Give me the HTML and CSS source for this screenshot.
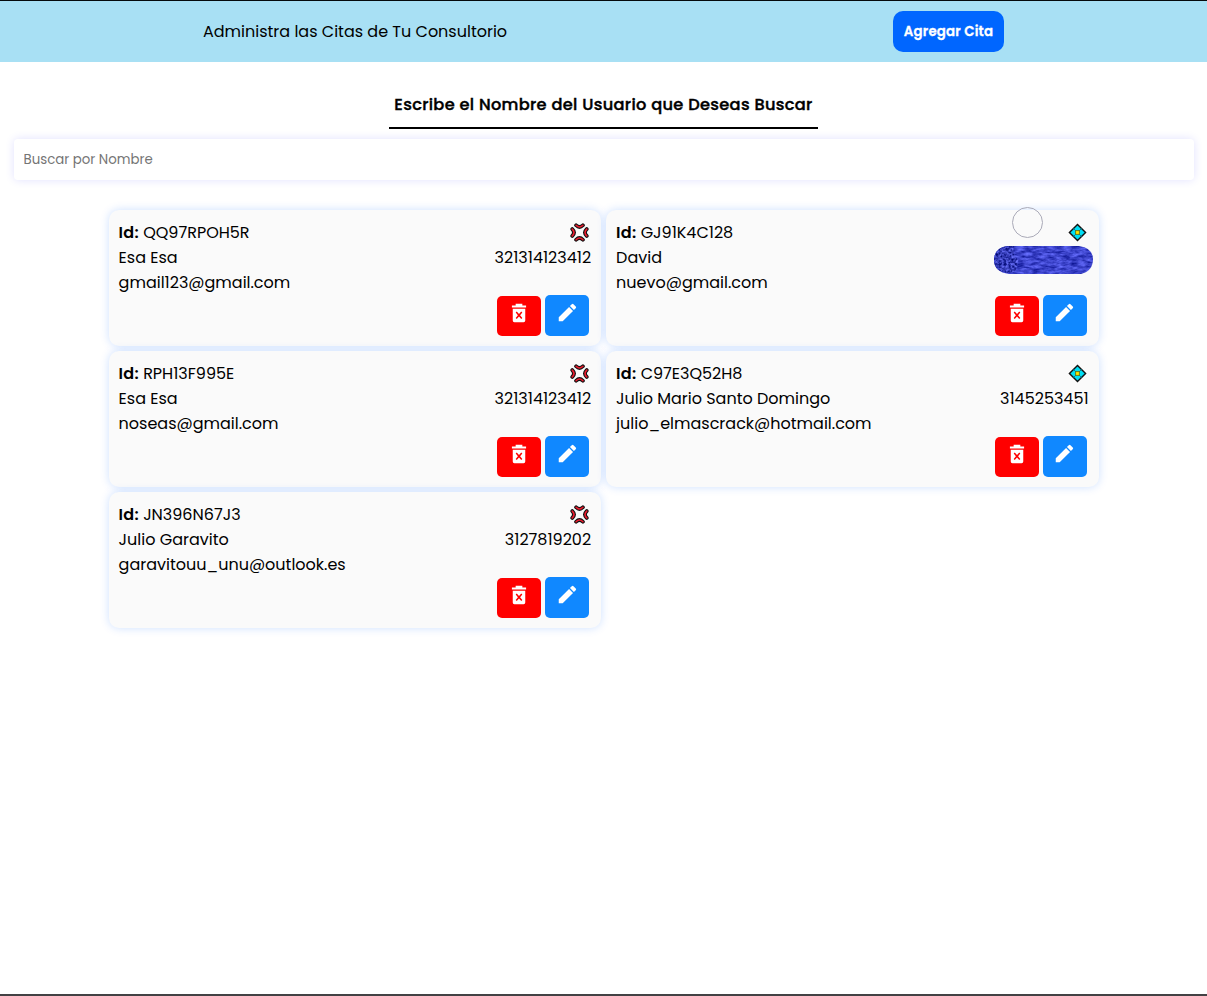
FILE: index.html
```
<!DOCTYPE html>
<html lang="es">
<head>
<meta charset="utf-8">
<title>Citas</title>
<link rel="stylesheet" href="styles.css">
</head>
<body>
<svg class="defs" width="0" height="0">
  <symbol id="urgent" viewBox="0 0 20 20">
    <g fill="none" stroke-linecap="round">
      <path stroke="#111" stroke-width="4" d="M6.400 2.400Q10 6 13.600 2.400M6.400 17.600Q10 14 13.600 17.600M2.400 6.400Q6 10 2.400 13.600M17.600 6.400Q14 10 17.600 13.600"/>
      <path stroke="#ee1c2e" stroke-width="1.700" d="M6.400 2.400Q10 6 13.600 2.400M6.400 17.600Q10 14 13.600 17.600M2.400 6.400Q6 10 2.400 13.600M17.600 6.400Q14 10 17.600 13.600"/>
    </g>
  </symbol>
  <symbol id="normal" viewBox="0 0 20 20">
    <path d="M10 1.500 18.500 10 10 18.500 1.500 10Z" fill="#00dff5" stroke="#111" stroke-width="1.500"/>
    <path d="m5.700 5.700 8.600 8.600m0-8.600-8.600 8.600" stroke="#087b8b" stroke-width="1"/>
    <path d="M8 8h4v4H8z" fill="#ffe600" stroke="#665f00" stroke-width=".8"/>
  </symbol>
  <symbol id="trash" viewBox="0 0 24 24">
    <path fill="#fff" fill-rule="evenodd" d="M3.500 3h4.500V1h8v2h4.500v2.500h-17zM4.500 7h15v14q0 2-2 2h-11q-2 0-2-2zM9.300 10.200 8 11.500 10.700 14.700 8 17.900 9.300 19.200 12 16.200 14.700 19.200 16 17.900 13.300 14.700 16 11.500 14.700 10.200 12 13.200z"/>
  </symbol>
  <symbol id="pencil" viewBox="0 0 24 24">
    <path fill="#fff" d="M2 17.500V22h4.500L18.300 10.200l-4.500-4.500zM21.400 7.100a1.300 1.300 0 0 0 0-1.900l-2.600-2.600a1.300 1.300 0 0 0-1.900 0l-2.100 2.100 4.500 4.500z"/>
  </symbol>
</svg>
<header class="header">
  <p class="brand">Administra las Citas de Tu Consultorio</p>
  <button class="add">Agregar Cita</button>
</header>
<main>
  <h1 class="title">Escribe el Nombre del Usuario que Deseas Buscar</h1>
  <input class="search" placeholder="Buscar por Nombre">
  <section class="grid">
    <article class="card">
      <div class="row"><p><b>Id:</b> QQ97RPOH5R</p><svg class="state"><use href="#urgent"/></svg></div>
      <div class="row"><p>Esa Esa</p><p>321314123412</p></div>
      <p>gmail123@gmail.com</p>
      <div class="actions"><button class="del"><svg><use href="#trash"/></svg></button><button class="edit"><svg><use href="#pencil"/></svg></button></div>
    </article>
    <article class="card">
      <div class="row"><p><b>Id:</b> GJ91K4C128</p><svg class="state"><use href="#normal"/></svg></div>
      <div class="row"><p>David</p></div>
      <p>nuevo@gmail.com</p>
      <div class="actions"><button class="del"><svg><use href="#trash"/></svg></button><button class="edit"><svg><use href="#pencil"/></svg></button></div>
      <svg class="scribble" viewBox="0 0 99 28">
        <defs>
          <filter id="ink" x="0" y="0" width="1" height="1" color-interpolation-filters="sRGB"><feTurbulence type="fractalNoise" baseFrequency=".13 .4" numOctaves="3" seed="4"/><feColorMatrix values=".5 0 0 0 -.01  .5 0 0 0 .02  .6 0 0 0 .5  0 0 0 0 1"/><feComposite in2="SourceGraphic" operator="in"/></filter>
          <filter id="grain" x="0" y="0" width="1" height="1" color-interpolation-filters="sRGB"><feTurbulence type="fractalNoise" baseFrequency=".4" numOctaves="2" seed="8"/><feColorMatrix values=".7 0 0 0 -.14  .7 0 0 0 -.11  .9 0 0 0 .27  0 0 0 0 1"/><feComposite in2="SourceGraphic" operator="in"/></filter>
        </defs>
        <path d="M13 0h72q14 2 14 13 0 12-12 15H15Q0 26 0 14 0 2 13 0z" fill="#3840c4" filter="url(#ink)"/>
        <path d="M13 0h7q-2 8 4 14 0 8-4 12l-7 1Q0 25 0 14 0 2 13 0z" fill="#3840c4" filter="url(#grain)"/>
      </svg>
      <span class="pointer"></span>
    </article>
    <article class="card">
      <div class="row"><p><b>Id:</b> RPH13F995E</p><svg class="state"><use href="#urgent"/></svg></div>
      <div class="row"><p>Esa Esa</p><p>321314123412</p></div>
      <p>noseas@gmail.com</p>
      <div class="actions"><button class="del"><svg><use href="#trash"/></svg></button><button class="edit"><svg><use href="#pencil"/></svg></button></div>
    </article>
    <article class="card">
      <div class="row"><p><b>Id:</b> C97E3Q52H8</p><svg class="state"><use href="#normal"/></svg></div>
      <div class="row"><p>Julio Mario Santo Domingo</p><p>3145253451</p></div>
      <p>julio_elmascrack@hotmail.com</p>
      <div class="actions"><button class="del"><svg><use href="#trash"/></svg></button><button class="edit"><svg><use href="#pencil"/></svg></button></div>
    </article>
    <article class="card">
      <div class="row"><p><b>Id:</b> JN396N67J3</p><svg class="state"><use href="#urgent"/></svg></div>
      <div class="row"><p>Julio Garavito</p><p>3127819202</p></div>
      <p>garavitouu_unu@outlook.es</p>
      <div class="actions"><button class="del"><svg><use href="#trash"/></svg></button><button class="edit"><svg><use href="#pencil"/></svg></button></div>
    </article>
  </section>
</main>
</body>
</html>
```
FILE: styles.css
```
* { box-sizing: border-box; margin: 0; padding: 0; }
body { height: 996px; overflow: hidden; border-top: 1px solid #050a0c; border-bottom: 2px solid #434144; background: #fff; color: #000; font: 16px/25px Poppins, Inter, sans-serif; }
button, input { font-family: inherit; border: 0; }
.defs { position: absolute; }
.header { height: 61px; padding: 0 203px; background: #a8e0f4; display: flex; align-items: center; justify-content: space-between; white-space: nowrap; }
.add { width: 111px; height: 41px; border-radius: 10px; background: #06f; color: #fff; font-size: 13.33px; font-weight: 600; letter-spacing: .2px; -webkit-text-stroke: .3px #fff; white-space: nowrap; }
.title { width: 429px; height: 49px; margin: 18px auto 10px; border-bottom: 2px solid #000; font-size: 16.200px; line-height: 49px; font-weight: 500; letter-spacing: .33px; -webkit-text-stroke: .4px #000; text-align: center; white-space: nowrap; }
.search { display: block; width: 1180px; height: 41px; margin-left: 14px; padding: 0 9.500px; border-radius: 4px; background: #fff; box-shadow: 0 0 10px rgba(0, 0, 255, .12); font-size: 13.33px; }
.search::placeholder { color: #757575; }
.grid { width: 990px; margin: 30px 0 0 108.600px; display: grid; grid-template-columns: 1fr 1fr; gap: 5px; }
.card { position: relative; height: 136px; padding: 10px; border-radius: 10px; background: #fafafa; box-shadow: 0 0 10px rgba(0, 100, 255, .2); white-space: nowrap; }
.row { height: 25px; display: flex; align-items: center; justify-content: space-between; }
b { font-weight: 600; letter-spacing: .25px; }
.state { width: 19px; height: 19px; margin: -1px 2px 0 0; }
.actions { height: 41px; padding-right: 2px; display: flex; gap: 4px; justify-content: flex-end; align-items: flex-end; }
.actions button { width: 44px; border-radius: 5px; display: flex; justify-content: center; }
.del { height: 40px; padding-top: 7px; background: #f00; }
.edit { height: 41px; padding-top: 7px; background: #1088ff; }
.del svg { width: 20px; height: 20px; }
.edit svg { width: 21px; height: 21px; }
.scribble { position: absolute; left: 388px; top: 36px; width: 99px; height: 28px; }
.pointer { position: absolute; left: 406px; top: -3px; width: 31px; height: 31px; border: 1px solid #aaaab8; border-radius: 50%; }
```
